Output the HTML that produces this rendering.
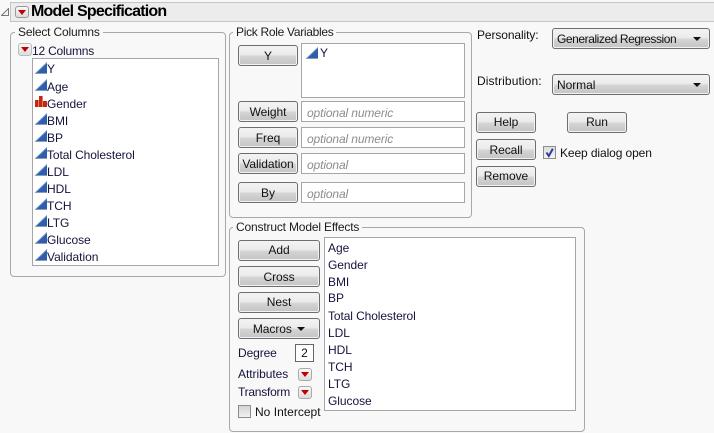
<!DOCTYPE html>
<html><head><meta charset="utf-8"><style>
html,body{margin:0;padding:0}
body{width:714px;height:433px;background:#f8f8f8;overflow:hidden;position:relative;font-family:"Liberation Sans",sans-serif;font-size:12px;color:#111}
.a,.t,.b,.f,.g,.r,.d,.i{position:absolute;box-sizing:border-box}
.t{white-space:nowrap;line-height:14px;height:14px;letter-spacing:-.05px}
.n{color:#14143c}
.g{border:1px solid #a8a8a8;border-radius:4px}
.l{background:#f8f8f8;padding:0 3px}
.b{border:1px solid #6e6e6e;border-radius:3px;background:linear-gradient(#f4f4f4 0,#ebebeb 45%,#d4d4d4 55%,#c4c4c4 100%);text-align:center;box-shadow:inset 0 0 0 1px #f2f2f2;line-height:21px;letter-spacing:-.05px}
.f{background:#fff;border:1px solid #a6a6a6}
.f span{position:absolute;left:5px;top:4px;font-style:italic;color:#8c8c8c;line-height:14px;letter-spacing:-.12px}
.r{width:14px;height:13px;border:1px solid #aaa;border-radius:3px;background:linear-gradient(#f8f8f8,#dcdcdc)}
.r:after{content:"";position:absolute;left:2px;top:3px;border-left:4px solid transparent;border-right:4px solid transparent;border-top:5px solid #c00000}
.i{width:13px;height:12px}
.d:after{content:"";position:absolute;right:8px;top:8px;border-left:4px solid transparent;border-right:4px solid transparent;border-top:4px solid #111}
</style></head><body>
<div class="a" style="left:10px;top:2px;width:704px;height:20px;background:#ececec;border-top:1px solid #c4c4c4;border-bottom:1px solid #c4c4c4;border-left:1px solid #c4c4c4"></div>
<svg class="a" style="left:1px;top:8px" width="8" height="8"><path d="M.5 7.5H7.5V.5Z" fill="#f4f4f4" stroke="#777"/></svg>
<div class="r" style="left:15px;top:6px;height:12px;border-color:#999"></div>
<div class="t" style="left:31px;top:3px;font-size:16px;font-weight:bold;line-height:18px;height:18px;color:#000;letter-spacing:-.78px">Model Specification</div>

<div class="g" style="left:10px;top:32px;width:216px;height:245px"></div>
<div class="t l" style="left:15px;top:25px;color:#1c1c1c;letter-spacing:-.17px">Select Columns</div>
<div class="r" style="left:18px;top:43px;border-color:#bbb"></div>
<div class="t n" style="left:32px;top:44px;letter-spacing:-.2px">12 Columns</div>
<div class="f" style="left:32px;top:58px;width:187px;height:208px"></div>

<svg width="0" height="0" style="position:absolute"><defs>
<g id="c"><path d="M0 11.5 12 0V11.5Z" fill="#2d5fae"/><path d="M0 11.5H12" stroke="#8e9bb0" stroke-width="1"/><path d="M1 11 12 .8" stroke="#7f9fd0" stroke-width=".7"/></g>
<g id="o"><path d="M0 4H3.6V11H0ZM4 0H7.6V11H4ZM8 5H12V11H8Z" fill="#c5280e"/></g>
</defs></svg>
<svg class="i" style="left:35px;top:62px"><use href="#c"/></svg><div class="t n" style="left:47px;top:62px">Y</div>
<svg class="i" style="left:35px;top:79px"><use href="#c"/></svg><div class="t n" style="left:47px;top:80px">Age</div>
<svg class="i" style="left:35px;top:96px"><use href="#o"/></svg><div class="t n" style="left:47px;top:97px">Gender</div>
<svg class="i" style="left:35px;top:113px"><use href="#c"/></svg><div class="t n" style="left:47px;top:114px">BMI</div>
<svg class="i" style="left:35px;top:130px"><use href="#c"/></svg><div class="t n" style="left:47px;top:131px">BP</div>
<svg class="i" style="left:35px;top:147px"><use href="#c"/></svg><div class="t n" style="left:47px;top:148px;letter-spacing:-.1px">Total Cholesterol</div>
<svg class="i" style="left:35px;top:164px"><use href="#c"/></svg><div class="t n" style="left:47px;top:165px">LDL</div>
<svg class="i" style="left:35px;top:181px"><use href="#c"/></svg><div class="t n" style="left:47px;top:182px">HDL</div>
<svg class="i" style="left:35px;top:198px"><use href="#c"/></svg><div class="t n" style="left:47px;top:199px">TCH</div>
<svg class="i" style="left:35px;top:215px"><use href="#c"/></svg><div class="t n" style="left:47px;top:216px">LTG</div>
<svg class="i" style="left:35px;top:232px"><use href="#c"/></svg><div class="t n" style="left:47px;top:233px">Glucose</div>
<svg class="i" style="left:35px;top:249px"><use href="#c"/></svg><div class="t n" style="left:47px;top:250px">Validation</div>

<div class="g" style="left:229px;top:32px;width:243px;height:186px"></div>
<div class="t l" style="left:233px;top:25px;color:#1c1c1c;letter-spacing:-.3px">Pick Role Variables</div>
<div class="b" style="left:238px;top:45px;width:60px;height:21px">Y</div>
<div class="f" style="left:301px;top:43px;width:164px;height:55px"></div>
<svg class="i" style="left:306px;top:47px"><use href="#c"/></svg><div class="t n" style="left:320px;top:46px">Y</div>
<div class="b" style="left:238px;top:101px;width:60px;height:21px">Weight</div>
<div class="f" style="left:301px;top:101px;width:164px;height:21px"><span>optional numeric</span></div>
<div class="b" style="left:238px;top:127px;width:60px;height:21px">Freq</div>
<div class="f" style="left:301px;top:127px;width:164px;height:21px"><span>optional numeric</span></div>
<div class="b" style="left:238px;top:153px;width:60px;height:21px">Validation</div>
<div class="f" style="left:301px;top:153px;width:164px;height:21px"><span>optional</span></div>
<div class="b" style="left:238px;top:182px;width:60px;height:21px">By</div>
<div class="f" style="left:301px;top:182px;width:164px;height:21px"><span>optional</span></div>

<div class="t" style="left:477px;top:28px;letter-spacing:-.1px">Personality:</div>
<div class="b d" style="left:552px;top:28px;width:158px;height:21px;line-height:20px;text-align:left;padding-left:4px;letter-spacing:-.43px">Generalized Regression</div>
<div class="t" style="left:477px;top:74px;letter-spacing:.1px">Distribution:</div>
<div class="b d" style="left:552px;top:74px;width:158px;height:21px;line-height:20px;text-align:left;padding-left:4px">Normal</div>
<div class="b" style="left:476px;top:112px;width:60px;height:21px;line-height:19px">Help</div>
<div class="b" style="left:567px;top:112px;width:60px;height:21px;line-height:19px">Run</div>
<div class="b" style="left:476px;top:139px;width:60px;height:21px">Recall</div>
<div class="b" style="left:476px;top:166px;width:60px;height:21px;line-height:19px">Remove</div>
<div class="a" style="left:543px;top:146px;width:13px;height:13px;border:1px solid #8e8e8e;background:linear-gradient(#dcdcdc,#f4f4f4)"></div>
<svg class="a" style="left:543px;top:146px" width="13" height="13"><path d="M3.5 6.5 5.8 10 9.8 2.8" fill="none" stroke="#2c3a9c" stroke-width="2"/></svg>
<div class="t" style="left:560px;top:146px;letter-spacing:-.1px">Keep dialog open</div>

<div class="g" style="left:229px;top:227px;width:356px;height:205px"></div>
<div class="t l" style="left:233px;top:220px;color:#1c1c1c;letter-spacing:-.17px">Construct Model Effects</div>
<div class="b" style="left:238px;top:240px;width:82px;height:21px;line-height:19px">Add</div>
<div class="b" style="left:238px;top:266px;width:82px;height:21px">Cross</div>
<div class="b" style="left:238px;top:292px;width:82px;height:21px;line-height:19px">Nest</div>
<div class="b" style="left:238px;top:318px;width:82px;height:21px">Macros <span style="display:inline-block;vertical-align:2px;margin-left:2px;border-left:4px solid transparent;border-right:4px solid transparent;border-top:4px solid #111"></span></div>
<div class="f" style="left:324px;top:237px;width:252px;height:174px"></div>
<div class="t n" style="left:328px;top:241px">Age</div>
<div class="t n" style="left:328px;top:258px">Gender</div>
<div class="t n" style="left:328px;top:275px">BMI</div>
<div class="t n" style="left:328px;top:291px">BP</div>
<div class="t n" style="left:328px;top:309px;letter-spacing:-.1px">Total Cholesterol</div>
<div class="t n" style="left:328px;top:326px">LDL</div>
<div class="t n" style="left:328px;top:343px">HDL</div>
<div class="t n" style="left:328px;top:360px">TCH</div>
<div class="t n" style="left:328px;top:377px">LTG</div>
<div class="t n" style="left:328px;top:394px">Glucose</div>
<div class="t n" style="left:238px;top:346px;letter-spacing:-.1px">Degree</div>
<div class="a" style="left:295px;top:344px;width:19px;height:18px;border:1px solid #666;background:#fff;text-align:center;line-height:16px">2</div>
<div class="t n" style="left:238px;top:367px">Attributes</div>
<div class="r" style="left:298px;top:368px"></div>
<div class="t n" style="left:238px;top:385px;letter-spacing:-.25px">Transform</div>
<div class="r" style="left:298px;top:386px"></div>
<div class="a" style="left:238px;top:405px;width:13px;height:13px;border:1px solid #8e8e8e;background:linear-gradient(#d4d4d4,#f0f0f0)"></div>
<div class="t" style="left:255px;top:405px;letter-spacing:.02px">No Intercept</div>
</body></html>
